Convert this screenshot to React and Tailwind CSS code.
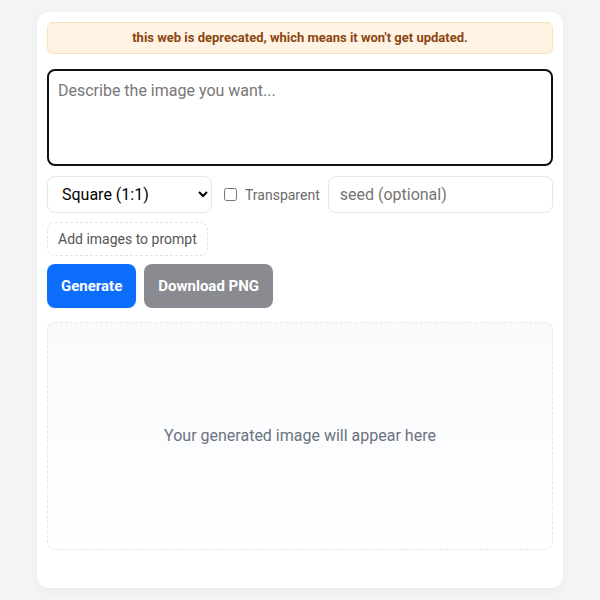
export default function App() {
  return (
    <div
      className="min-h-[600px] bg-[#f4f4f5] pt-3 pb-3"
      style={{ fontFamily: "Roboto, 'Noto Sans', sans-serif" }}
    >
      <div className="mx-auto w-[526px] rounded-xl bg-white px-[10px] pt-[10px] pb-[38px] shadow-[0_2px_10px_rgba(0,0,0,0.05)]">
        {/* deprecation notice */}
        <div className="flex h-8 items-center justify-center rounded-md border border-[#fbe0bd] bg-[#fff4e3] text-[13px] font-bold text-[#8b4513]">
          this web is deprecated, which means it won't get updated.
        </div>

        <textarea
          className="mt-[15px] block h-[97px] w-full resize-none rounded-lg border-2 border-[#111111] px-[9px] py-[8px] text-base text-[#222] outline-none placeholder:text-[#777777]"
          placeholder="Describe the image you want..."
        />

        <div className="mt-[10px] flex items-center gap-2">
          <select className="h-[37px] w-[165px] shrink-0 rounded-lg border border-[#e5e7eb] bg-white px-[10px] text-base text-black">
            <option>Square (1:1)</option>
            <option>Portrait (3:4)</option>
            <option>Landscape (4:3)</option>
          </select>
          <label className="ml-[4px] flex shrink-0 items-center gap-[8px] text-sm text-[#6b6b6b]">
            <input type="checkbox" className="h-[13px] w-[13px]" />
            Transparent
          </label>
          <input
            className="h-[37px] min-w-0 flex-1 rounded-lg border border-[#e5e7eb] px-[11px] text-base outline-none placeholder:text-[#757575]"
            placeholder="seed (optional)"
          />
        </div>

        <div className="mt-[9px] flex">
          <button className="h-[34px] rounded-lg border border-dashed border-[#e3e3e3] px-[10px] text-sm text-[#555]">
            Add images to prompt
          </button>
        </div>

        <div className="mt-2 flex gap-2">
          <button className="h-11 rounded-lg bg-[#0d6efd] px-[14px] text-[15px] font-bold text-white">
            Generate
          </button>
          <button className="h-11 rounded-lg bg-[#898b90] px-[14px] text-[15px] font-bold text-white">
            Download PNG
          </button>
        </div>

        <div className="mt-[14px] flex h-[228px] items-center justify-center rounded-lg border border-dashed border-[#e5e7eb] bg-gradient-to-b from-[#f8fafc] to-white text-base text-[#6b7280]">
          Your generated image will appear here
        </div>
      </div>
    </div>
  );
}
